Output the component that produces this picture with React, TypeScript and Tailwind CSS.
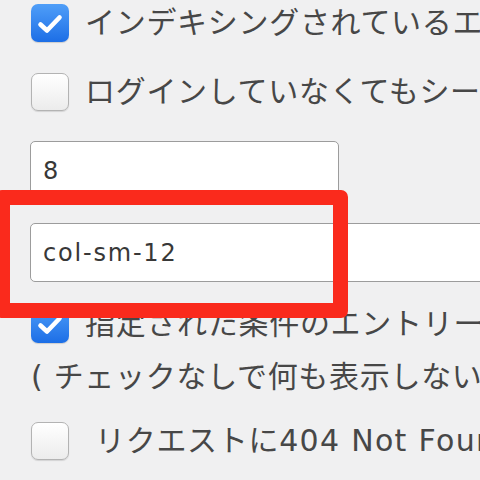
import React from 'react';

const jp = '"DejaVu Sans", "Noto Sans CJK JP", sans-serif';

function Box({ checked }: { checked?: boolean }) {
  if (checked) {
    return (
      <span className="block w-[38px] h-[38px] shrink-0 rounded-[7px] bg-gradient-to-b from-[#4f9ef8] to-[#1c6ee6] shadow-[0_1px_1px_rgba(0,0,0,0.15)]">
        <svg viewBox="0 0 38 38" className="w-[38px] h-[38px]">
          <path d="M9.5 20.5 L16 26.5 L28.5 13.5" fill="none" stroke="#fff" strokeWidth="4.6" strokeLinecap="round" strokeLinejoin="round" />
        </svg>
      </span>
    );
  }
  return (
    <span className="block w-[38px] h-[38px] shrink-0 rounded-[7px] border-[1.5px] border-[#b3b3b3] bg-gradient-to-b from-[#ffffff] to-[#ececec] shadow-[0_1px_1px_rgba(0,0,0,0.12)]" />
  );
}

function Row({ checked, children, className = '' }: { checked?: boolean; children: React.ReactNode; className?: string }) {
  return (
    <div className={`flex items-center h-[38px] ml-[1px] ${className}`}>
      <Box checked={checked} />
      <span className="ml-[16px] whitespace-nowrap text-[30px] leading-[38px] tracking-[0.7px] text-[#474747]">{children}</span>
    </div>
  );
}

export default function App() {
  return (
    <div className="relative w-[480px] h-[480px] overflow-hidden bg-[#f0f0f1]" style={{ fontFamily: jp }}>
      <div className="flex flex-col pl-[30px] pt-[4px]">
        <Row checked>インデキシングされているエントリー</Row>
        <Row className="mt-[31px]">ログインしていなくてもシークレット</Row>

        <div className="mt-[30px] w-[309px] h-[59px] flex items-center rounded-[5px] border border-[#9c9c9c] bg-white pl-[12px]">
          <span className="text-[24px] text-[#383838] tracking-[1.5px]">8</span>
        </div>

        <div className="mt-[23px] w-[520px] h-[59px] flex items-center rounded-[5px] border border-[#9c9c9c] bg-white pl-[12px]">
          <span className="text-[24px] text-[#383838] tracking-[1.8px] whitespace-nowrap">col-sm-12</span>
        </div>

        <Row checked className="mt-[23px]">指定された条件のエントリーを表示</Row>
        <div className="mt-[19px] ml-[1px] h-[30px] leading-[30px] text-[30px] tracking-[0.7px] text-[#474747] whitespace-nowrap">( チェックなしで何も表示しない )</div>

        <Row className="mt-[30px]">
          <span className="ml-[10px]">リクエストに<span className="tracking-[1.3px]">404 Not Found</span></span>
        </Row>
      </div>

      <div className="absolute left-[-5px] top-[190px] w-[353px] h-[128px] rounded-[7px] border-[15px] border-[#fa2a1c]" />
    </div>
  );
}
